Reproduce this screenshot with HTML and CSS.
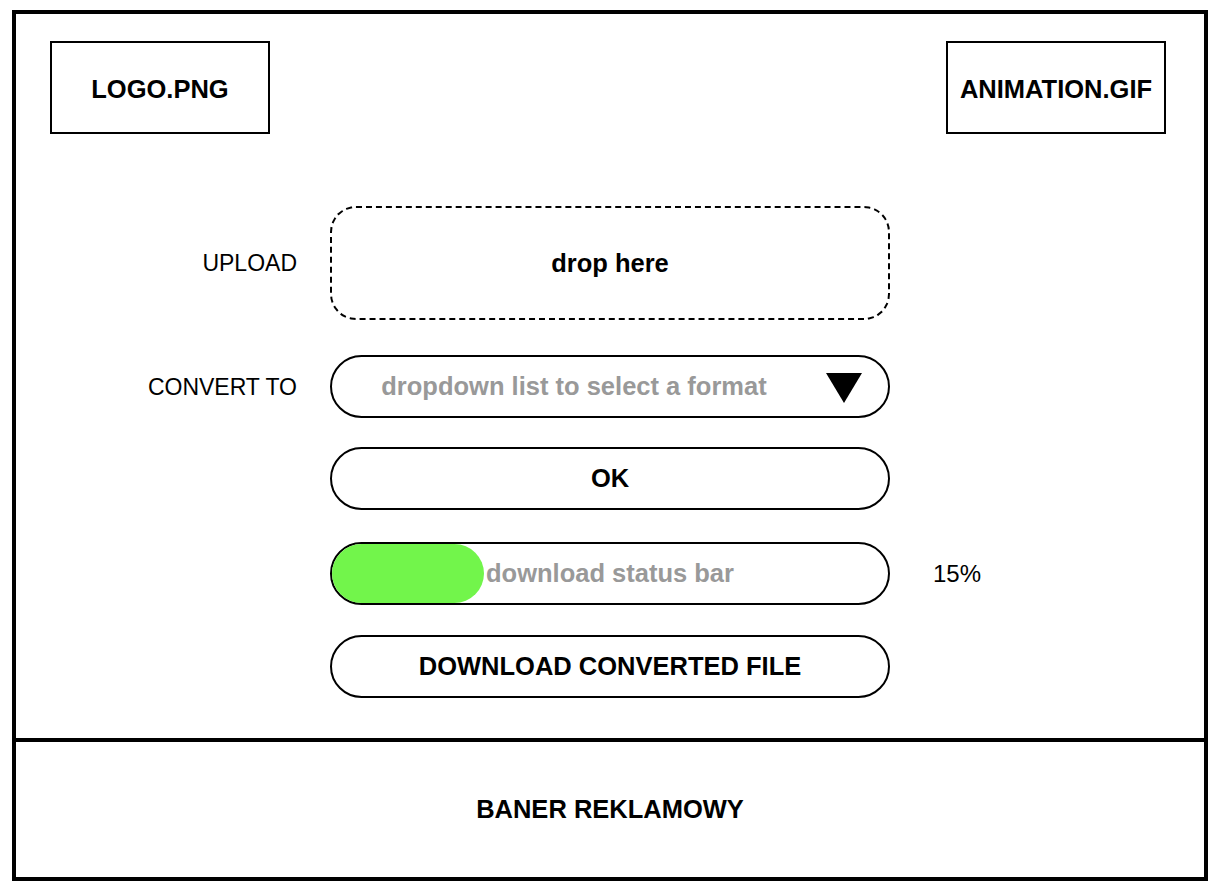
FILE: index.html
```html
<!DOCTYPE html>
<html lang="en">
<head>
<meta charset="utf-8">
<title>File converter wireframe</title>
<link rel="stylesheet" href="styles.css">
</head>
<body>
<div class="frame">
  <main class="main">
    <header class="header">
      <div class="asset-box">LOGO.PNG</div>
      <div class="asset-box">ANIMATION.GIF</div>
    </header>
    <section class="form">
      <div class="row row-upload">
        <div class="label">UPLOAD</div>
        <div class="dropzone">drop here</div>
      </div>
      <div class="row row-convert">
        <div class="label">CONVERT TO</div>
        <div class="pill select">
          <span class="placeholder">dropdown list to select a format</span>
          <svg class="caret" width="36" height="30" viewBox="0 0 36 30" aria-hidden="true"><polygon points="0,0 36,0 18,30" fill="#000"/></svg>
        </div>
      </div>
      <div class="row">
        <div class="label"></div>
        <div class="pill button">OK</div>
      </div>
      <div class="row row-progress">
        <div class="label"></div>
        <div class="pill progress">
          <div class="progress-fill"></div>
          <span class="progress-text">download status bar</span>
        </div>
        <div class="percent">15%</div>
      </div>
      <div class="row row-download">
        <div class="label"></div>
        <div class="pill button">DOWNLOAD CONVERTED FILE</div>
      </div>
    </section>
  </main>
  <footer class="banner">BANER REKLAMOWY</footer>
</div>
</body>
</html>
```

FILE: styles.css
```css
html, body {
  margin: 0;
  padding: 0;
  background: #fff;
}

body {
  font-family: "Liberation Sans", Arial, Helvetica, sans-serif;
  color: #000;
}

.frame {
  box-sizing: border-box;
  margin: 10px 0 0 12px;
  width: 1196px;
  height: 871px;
  border: 4px solid #000;
  display: flex;
  flex-direction: column;
}

.main {
  flex: 1;
  padding: 27px 38px 0 34px;
}

.header {
  display: flex;
  justify-content: space-between;
}

.asset-box {
  box-sizing: border-box;
  width: 220px;
  height: 93px;
  padding-top: 3px;
  border: 2px solid #000;
  display: flex;
  align-items: center;
  justify-content: center;
  font-size: 25.5px;
  font-weight: bold;
}

.form {
  margin-top: 72px;
  display: flex;
  flex-direction: column;
  gap: 29px;
}

.row {
  display: flex;
  align-items: center;
  gap: 33px;
}

.row-convert {
  margin-top: 6px;
}

.row-progress {
  margin-top: 3px;
}

.row-download {
  margin-top: 1px;
}

.label {
  width: 247px;
  flex: none;
  text-align: right;
  font-size: 23px;
  padding-top: 1px;
}

.dropzone {
  box-sizing: border-box;
  width: 560px;
  height: 114px;
  border: 2px dashed #000;
  border-radius: 26px;
  display: flex;
  align-items: center;
  justify-content: center;
  font-size: 25.5px;
  font-weight: bold;
}

.pill {
  box-sizing: border-box;
  width: 560px;
  height: 63px;
  border: 2px solid #000;
  border-radius: 31.5px;
  display: flex;
  align-items: center;
  justify-content: center;
  font-size: 25.5px;
  font-weight: bold;
  flex: none;
}

.select {
  justify-content: space-between;
  padding: 0 26px 0 30px;
}

.placeholder {
  color: #999;
  flex: 1;
  text-align: center;
}

.caret {
  display: block;
  margin-left: 40px;
  margin-top: 2px;
}

.progress {
  position: relative;
  overflow: hidden;
}

.progress-fill {
  position: absolute;
  left: -2px;
  top: 0;
  bottom: 0;
  width: 154px;
  background: #72f54b;
  border-radius: 0 31px 31px 0;
}

.progress-text {
  position: relative;
  color: #999;
}

.percent {
  font-size: 24px;
  margin-left: 10px;
}

.banner {
  height: 135px;
  border-top: 4px solid #000;
  display: flex;
  align-items: center;
  justify-content: center;
  font-size: 25.5px;
  font-weight: bold;
}
```
